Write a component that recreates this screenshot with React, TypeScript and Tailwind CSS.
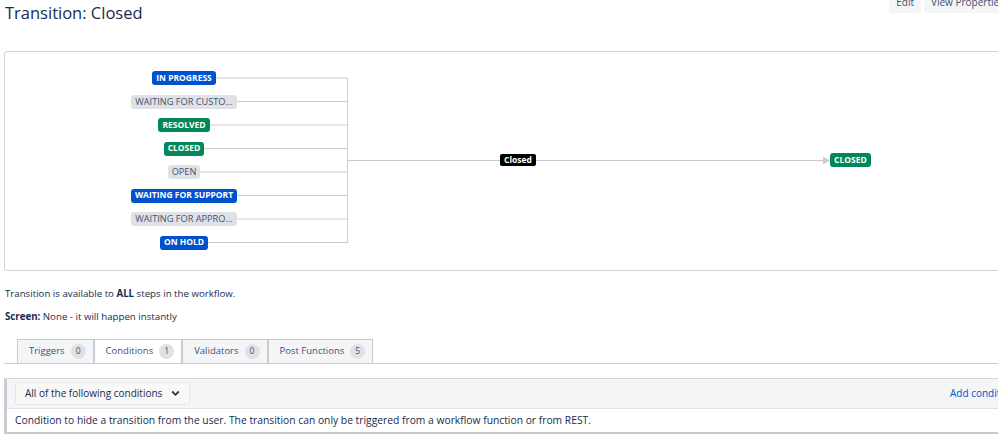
import React from "react";

const font = { fontFamily: '"Open Sans", "Noto Sans", sans-serif' };

type Loz = { label: string; tone: "blue" | "green" | "gray" };

const steps: Loz[] = [
  { label: "IN PROGRESS", tone: "blue" },
  { label: "WAITING FOR CUSTO...", tone: "gray" },
  { label: "RESOLVED", tone: "green" },
  { label: "CLOSED", tone: "green" },
  { label: "OPEN", tone: "gray" },
  { label: "WAITING FOR SUPPORT", tone: "blue" },
  { label: "WAITING FOR APPRO...", tone: "gray" },
  { label: "ON HOLD", tone: "blue" },
];

const toneClass = {
  blue: "bg-[#0052cc] text-white font-bold text-[8.5px]",
  green: "bg-[#00875a] text-white font-bold text-[8.5px]",
  gray: "bg-[#dfe1e6] text-[#42526e] text-[9.2px]",
};

const Lozenge = ({ label, tone }: Loz) => (
  <span
    className={`inline-flex h-[14px] items-center whitespace-nowrap rounded-[3px] px-[4px] leading-none ${toneClass[tone]}`}
  >
    {label}
  </span>
);

const rowsY = [26, 49.5, 73, 96.5, 120, 143.5, 167, 190.5];

const Tab = ({ label, count, active }: { label: string; count: number; active?: boolean }) => (
  <div
    className={`flex h-[24px] items-center gap-[6px] border border-b-0 border-[#c9ccd1] pl-[11px] pr-[7px] text-[9.5px] text-[#42526e] ${
      active ? "bg-white" : "bg-[#f4f5f7]"
    }`}
  >
    <span>{label}</span>
    <span className="flex h-[15px] min-w-[15px] items-center justify-center rounded-full bg-[#dfe1e6] px-[4px] text-[8.5px] text-[#42526e]">
      {count}
    </span>
  </div>
);

export default function App() {
  return (
    <div className="h-[436px] w-[998px] overflow-hidden bg-white" style={font}>
      <div className="w-[1060px] text-[#172b4d]">
        {/* header */}
        <div className="flex items-start justify-between pl-[5px] pr-[10px]">
          <h1 className="pt-[2px] text-[16.5px] leading-[22px] text-[#172b4d]">Transition: Closed</h1>
          <div className="-mt-[8px] flex gap-[3px]">
            <button className="h-[21px] rounded-[3px] bg-[#f4f5f7] px-[7px] text-[10px] text-[#42526e]">Edit</button>
            <button className="h-[21px] w-[126px] rounded-[3px] bg-[#f4f5f7] px-[7px] text-left text-[10px] text-[#42526e]">
              View Properties
            </button>
          </div>
        </div>

        {/* diagram */}
        <div className="ml-[4px] mt-[27px] h-[220px] w-[1040px] rounded-[3px] border border-[#cfd3d8]">
          <div className="relative h-full w-full">
            <svg className="absolute left-0 top-0" width="1000" height="218">
              {rowsY.map((y) => (
                <line key={y} x1="179" y1={y} x2="342" y2={y} stroke="#c8ccd2" strokeWidth="1" />
              ))}
              <line x1="342.5" y1="26" x2="342.5" y2="191" stroke="#c8ccd2" strokeWidth="1" />
              <line x1="342" y1="108.5" x2="818" y2="108.5" stroke="#c8ccd2" strokeWidth="1" />
              <polygon points="818,104.5 825,108.5 818,112.5" fill="#c8ccd2" />
            </svg>
            {steps.map((s, i) => (
              <div
                key={s.label}
                className="absolute left-[79px] flex w-[200px] justify-center"
                style={{ top: rowsY[i] - 7 }}
              >
                <Lozenge {...s} />
              </div>
            ))}
            <div className="absolute left-[495px] top-[102px] flex h-[12px] items-center rounded-[2px] bg-black px-[4px] text-[8.5px] font-bold leading-none text-white">
              Closed
            </div>
            <div className="absolute left-[825px] top-[101px] flex">
              <Lozenge label="CLOSED" tone="green" />
            </div>
          </div>
        </div>

        {/* info */}
        <p className="mt-[16px] pl-[5px] text-[9.7px] leading-[14px] text-[#172b4d]">
          Transition is available to <b>ALL</b> steps in the workflow.
        </p>
        <p className="mt-[9px] pl-[5px] text-[9.7px] leading-[14px] text-[#172b4d]">
          <b>Screen:</b> None - it will happen instantly
        </p>

        {/* tabs */}
        <div className="ml-[4px] mt-[15px] flex border-b border-[#c9ccd1] pl-[13px]">
          <Tab label="Triggers" count={0} />
          <Tab label="Conditions" count={1} active />
          <Tab label="Validators" count={0} />
          <Tab label="Post Functions" count={5} />
        </div>

        {/* conditions panel */}
        <div className="ml-[4px] mt-[14px] border-b-2 border-l-[3px] border-t border-[#d3d6da] border-b-[#c5c8cc] border-l-[#c9ccd0]">
          <div className="flex h-[30px] items-center justify-between border-b border-[#dfe1e6] bg-[#f4f5f7] pl-[8px] pr-[5px]">
            <div className="flex h-[23px] w-[175px] items-center justify-between rounded-[3px] border border-[#e4e6ea] bg-[#f8f8f9] pl-[9px] pr-[9px] text-[10px] text-[#172b4d]">
              <span>All of the following conditions</span>
              <svg width="9" height="7" viewBox="0 0 9 7">
                <path d="M1.2 1.5 L4.5 4.8 L7.8 1.5" fill="none" stroke="#253858" strokeWidth="1.8" />
              </svg>
            </div>
            <span className="mr-[40px] text-[10px] text-[#0052cc]">Add condition</span>
          </div>
          <div className="flex h-[23px] items-center bg-white pl-[8px] text-[10.3px] text-[#172b4d]">
            Condition to hide a transition from the user. The transition can only be triggered from a workflow function or from REST.
          </div>
        </div>
      </div>
    </div>
  );
}
